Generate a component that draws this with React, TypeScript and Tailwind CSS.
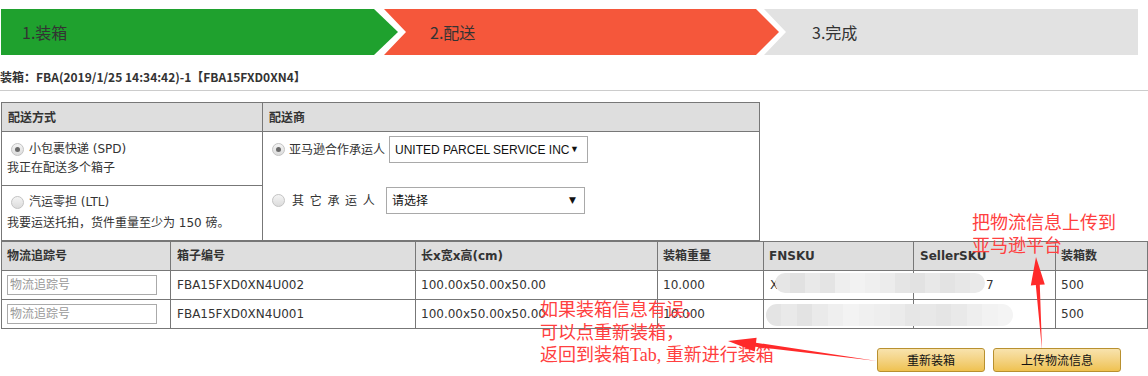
const rows = [
  { box: "FBA15FXD0XN4U002", size: "100.00x50.00x50.00", weight: "10.000", qty: "500" },
  { box: "FBA15FXD0XN4U001", size: "100.00x50.00x50.00", weight: "10.000", qty: "500" },
];

const blur1 = ["#e6e6e6", "#e1e1e1", "#e9e9e9", "#e4e4e4", "#eeeeee", "#f2f2f2", "#efefef", "#ececec", "#e5e5e5", "#e2e2e2", "#e8e8e8", "#e3e3e3", "#e7e7e7", "#eaeaea"];
const blur2 = ["#e4e4e4", "#e9e9e9", "#e3e3e3", "#eaeaea", "#efefef", "#f3f3f3", "#f0f0f0", "#eeeeee", "#ebebeb", "#e6e6e6", "#e8e8e8", "#e5e5e5", "#e9e9e9", "#eeeeee", "#f2f2f2", "#f4f4f4"];

function Radio({ checked }: { checked?: boolean }) {
  return (
    <span className="inline-flex h-[13px] w-[13px] shrink-0 items-center justify-center rounded-full border border-[#c4c4c4] bg-gradient-to-b from-[#f4f4f4] to-[#dcdcdc]">
      {checked && <span className="h-[5px] w-[5px] rounded-full bg-[#6a6a6a]" />}
    </span>
  );
}

function Blur({ colors, className }: { colors: string[]; className: string }) {
  return (
    <div className={`absolute flex overflow-hidden rounded-full blur-[0.6px] ${className}`}>
      {colors.map((c, i) => (
        <div key={i} className="h-full flex-1" style={{ background: c }} />
      ))}
    </div>
  );
}

export default function App() {
  return (
    <div className="relative h-[376px] w-[1148px] overflow-hidden bg-white text-[12px] text-[#333] [font-family:'DejaVu_Sans','Noto_Sans_CJK_SC',sans-serif]">
      {/* steps */}
      <div className="mt-[9px] flex h-[46px] text-[16px] text-[#333] [font-family:'Noto_Sans_CJK_SC',sans-serif]">
        <div className="ml-px flex w-[397px] items-center bg-[#1fa12e] pl-[21px] [clip-path:polygon(0_0,373px_0,100%_50%,373px_100%,0_100%)]">
          1.装箱
        </div>
        <div className="-ml-[14px] flex w-[395px] items-center bg-[#f5573b] pl-[46px] [clip-path:polygon(0_0,372px_0,100%_50%,372px_100%,0_100%,22px_50%)]">
          2.配送
        </div>
        <div className="-ml-[15px] flex w-[374px] items-center bg-[#e2e2e2] pl-[48px] [clip-path:polygon(0_0,100%_0,100%_100%,0_100%,22px_50%)]">
          3.完成
        </div>
      </div>

      <div className="h-[36px] border-b border-[#cccccc] pt-[14px] font-bold leading-[16px] [font-family:'Noto_Sans_CJK_SC',sans-serif]">
        装箱：FBA(2019/1/25 14:34:42)-1【FBA15FXD0XN4】
      </div>

      {/* shipping method */}
      <table className="mt-[11px] ml-px w-[759px] table-fixed border-collapse">
        <colgroup>
          <col className="w-[261px]" />
          <col />
        </colgroup>
        <tbody>
          <tr className="h-[29px] bg-[#dedede] font-bold">
            <td className="border border-[#777] pl-[6px] [font-family:'Noto_Sans_CJK_SC',sans-serif]">配送方式</td>
            <td className="border border-[#777] pl-[6px] [font-family:'Noto_Sans_CJK_SC',sans-serif]">配送商</td>
          </tr>
          <tr className="h-[54px]">
            <td className="border border-[#777] pl-[5px] align-top">
              <div className="mt-[9px] flex items-center gap-[5px] pl-[4px] leading-[16px]">
                <Radio checked />
                <span>小包裹快递 (SPD)</span>
              </div>
              <div className="mt-[3px] leading-[16px]">我正在配送多个箱子</div>
            </td>
            <td rowSpan={2} className="border border-[#777] pl-[9px] align-top">
              <div className="mt-[4px] flex items-center">
                <Radio checked />
                <span className="ml-[4px] w-[96px]">亚马逊合作承运人</span>
                <div className="ml-[4px] flex h-[27px] w-[199px] items-center justify-between border border-[#a9a9a9] pr-[8px] pl-[5px] text-[#111] [font-family:'Liberation_Sans',sans-serif]">
                  <span>UNITED PARCEL SERVICE INC</span>
                  <span className="text-[9px]">▼</span>
                </div>
              </div>
              <div className="mt-[24px] flex items-center">
                <Radio />
                <span className="ml-[7px] w-[94px] tracking-[5.7px]">其它承运人</span>
                <div className="flex h-[27px] w-[199px] items-center justify-between border border-[#a9a9a9] pr-[8px] pl-[5px] text-[#111]">
                  <span>请选择</span>
                  <span className="text-[9px]">▼</span>
                </div>
              </div>
            </td>
          </tr>
          <tr className="h-[55px]">
            <td className="border border-[#777] pl-[5px] align-top">
              <div className="mt-[8px] flex items-center gap-[5px] pl-[4px] leading-[16px]">
                <Radio />
                <span>汽运零担 (LTL)</span>
              </div>
              <div className="mt-[5px] leading-[16px]">我要运送托拍，货件重量至少为 150 磅。</div>
            </td>
          </tr>
        </tbody>
      </table>

      {/* boxes */}
      <table className="ml-px w-[1146px] table-fixed border-collapse">
        <colgroup>
          <col className="w-[169px]" />
          <col className="w-[245px]" />
          <col className="w-[242px]" />
          <col className="w-[106px]" />
          <col className="w-[150px]" />
          <col className="w-[142px]" />
          <col className="w-[92px]" />
        </colgroup>
        <thead>
          <tr className="h-[29px] bg-[#dedede] text-left font-bold">
            <th className="border border-[#777] pl-[5px]">物流追踪号</th>
            <th className="border border-[#777] pl-[6px]">箱子编号</th>
            <th className="border border-[#777] pl-[5px]">长x宽x高(cm)</th>
            <th className="border border-[#777] pl-[5px]">装箱重量</th>
            <th className="border border-[#777] pl-[5px]">FNSKU</th>
            <th className="border border-[#777] pl-[6px]">SellerSKU</th>
            <th className="border border-[#777] pl-[5px]">装箱数</th>
          </tr>
        </thead>
        <tbody>
          {rows.map((r) => (
            <tr key={r.box} className="h-[29px]">
              <td className="border border-[#777] pl-[5px]">
                <input
                  placeholder="物流追踪号"
                  className="h-[20px] w-[150px] border border-[#aaa] px-[2px] text-[12px] outline-none placeholder:text-[#999]"
                />
              </td>
              <td className="border border-[#777] pl-[6px]">{r.box}</td>
              <td className="border border-[#777] pl-[5px]">{r.size}</td>
              <td className="border border-[#777] pl-[5px]">{r.weight}</td>
              <td className="border border-[#777] pl-[6px]">X00XXXXXXX</td>
              <td className="border border-[#777] pl-[6px]">
                <span className="ml-[66px]">7</span>
              </td>
              <td className="border border-[#777] pl-[5px]">{r.qty}</td>
            </tr>
          ))}
        </tbody>
      </table>

      <div className="mt-[19px] flex justify-end gap-[8px] pr-[27px] [font-family:'Noto_Sans_CJK_SC',sans-serif]">
        <button className="h-[24px] w-[108px] rounded-[3px] border border-[#b8902f] bg-gradient-to-b from-[#f8e3ad] to-[#efc24f] text-[12px] text-[#111]">
          重新装箱
        </button>
        <button className="h-[24px] w-[128px] rounded-[3px] border border-[#b8902f] bg-gradient-to-b from-[#f8e3ad] to-[#efc24f] text-[12px] text-[#111]">
          上传物流信息
        </button>
      </div>

      {/* redaction over sku columns */}
      <Blur colors={blur1} className="top-[273px] left-[775px] h-[20px] w-[210px]" />
      <Blur colors={blur2} className="top-[304px] left-[766px] h-[22px] w-[247px]" />

      {/* annotations */}
      <div className="pointer-events-none absolute top-[212px] left-[972px] text-[18px] leading-[23px] text-[#ff4040] [font-family:'Liberation_Serif','Noto_Sans_CJK_SC',serif]">
        <div>把物流信息上传到</div>
        <div>亚马逊平台</div>
      </div>
      <div className="pointer-events-none absolute top-[299px] left-[540px] text-[18px] leading-[22.5px] text-[#ff4040] [font-family:'Liberation_Serif','Noto_Sans_CJK_SC',serif]">
        <div>如果装箱信息有误，</div>
        <div>可以点重新装箱，</div>
        <div>返回到装箱Tab, 重新进行装箱</div>
      </div>
      <svg className="pointer-events-none absolute top-0 left-0" width="1148" height="376" viewBox="0 0 1148 376">
        <polygon points="728,341 756.6,337.8 756,342.7 877,361 755.4,346.7 754.8,351.6" fill="#ff2a2a" />
        <polygon points="1036,257 1044.8,284.5 1039.8,284.8 1042,350 1035.8,285 1030.8,285.4" fill="#ff2a2a" />
      </svg>
    </div>
  );
}
